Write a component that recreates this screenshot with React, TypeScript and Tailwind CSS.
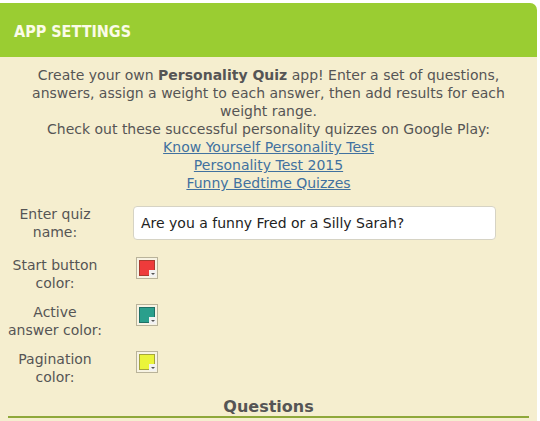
import React from "react";

const body = { fontFamily: '"DejaVu Sans", Verdana, sans-serif' };

function Swatch({ fill, edge }: { fill: string; edge: string }) {
  return (
    <div className="relative w-[22px] h-[22px] p-[2px] bg-[#f7f3e3] border border-[#b9b39a]">
      <div className="w-full h-full border" style={{ background: fill, borderColor: edge }} />
      <div className="absolute right-[1px] bottom-[1px] w-[7px] h-[7px] bg-[#f2f2f2] flex items-center justify-center">
        <div className="w-0 h-0 border-l-[2px] border-r-[2px] border-t-[2px] border-l-transparent border-r-transparent border-t-[#555]" />
      </div>
    </div>
  );
}

function Row({ label, children, center }: { label: React.ReactNode; children: React.ReactNode; center?: boolean }) {
  return (
    <div className={center ? "flex items-center" : "flex items-start"}>
      <div className="w-[110px] shrink-0 text-center text-[14px] leading-[18px] text-[#555]">{label}</div>
      <div className="flex-1 pl-[23px] pr-[41px]">{children}</div>
    </div>
  );
}

export default function App() {
  return (
    <div className="w-[540px] h-[421px] bg-white overflow-hidden" style={body}>
      <div className="mt-[3px] w-[537px] rounded-tr-[7px] overflow-hidden bg-[#f5eecf] h-[418px]">
        <div className="h-[54px] bg-[#9acd32] flex items-center px-[14px] pt-[3px]">
          <h1
            className="text-[16px] font-bold text-[#fbfbe8]"
            style={{ fontFamily: '"DejaVu Sans Condensed", "Liberation Sans", sans-serif' }}
          >
            APP SETTINGS
          </h1>
        </div>

        <div className="pt-[9px] text-center text-[14px] leading-[18px] text-[#555] whitespace-nowrap">
          <p>
            Create your own <b>Personality Quiz</b> app! Enter a set of questions,
            <br />
            answers, assign a weight to each answer, then add results for each
            <br />
            weight range.
          </p>
          <p>Check out these successful personality quizzes on Google Play:</p>
          <div className="flex flex-col items-center text-[#41719f]">
            <a href="#" className="underline">Know Yourself Personality Test</a>
            <a href="#" className="underline">Personality Test 2015</a>
            <a href="#" className="underline">Funny Bedtime Quizzes</a>
          </div>
        </div>

        <div className="mt-[13px] flex flex-col">
          <Row center label={<>Enter quiz<br />name:</>}>
            <div className="h-[34px] bg-white border border-[#d6d3c4] rounded-[4px] flex items-center px-[7px] text-[14px] text-[#222]">
              Are you a funny Fred or a Silly Sarah?
            </div>
          </Row>
          <div className="mt-[15px]">
            <Row label={<>Start button<br />color:</>}>
              <div className="ml-[3px] mt-[1px]"><Swatch fill="#ee3b3b" edge="#a83a2e" /></div>
            </Row>
          </div>
          <div className="mt-[11px]">
            <Row label={<>Active<br />answer color:</>}>
              <div className="ml-[3px] mt-[1px]"><Swatch fill="#2a9f8c" edge="#1f6f66" /></div>
            </Row>
          </div>
          <div className="mt-[11px]">
            <Row label={<>Pagination<br />color:</>}>
              <div className="ml-[3px] mt-[1px]"><Swatch fill="#eaf43a" edge="#a5a53a" /></div>
            </Row>
          </div>
        </div>

        <div className="mx-[8px] mt-[11px] border-b-2 border-[#8fa83a] text-center">
          <h2 className="text-[16px] font-bold text-[#555] leading-[19px]">Questions</h2>
        </div>
      </div>
    </div>
  );
}
